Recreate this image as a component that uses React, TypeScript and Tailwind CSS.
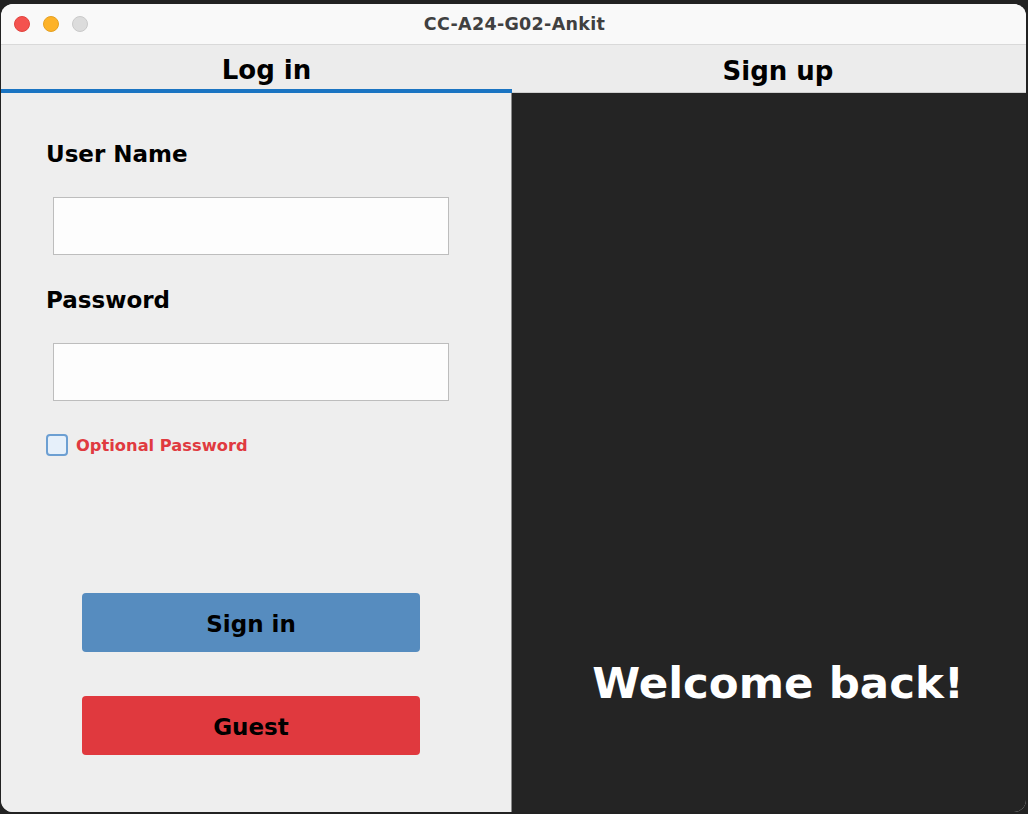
import React from "react";

export default function App() {
  const font = { fontFamily: '"DejaVu Sans", "Open Sans", sans-serif' };
  return (
    <div className="w-[1028px] h-[814px] bg-[#222222] overflow-hidden" style={font}>
      <div className="ml-[1px] mt-[4px] w-[1025px] h-[808px] rounded-[12px] overflow-hidden flex flex-col bg-[#eeeeee]">
        {/* title bar */}
        <div className="relative h-[41px] bg-[#f9f9f9] border-b border-[#d9d9d9] flex items-center justify-center shrink-0">
          <div className="absolute left-[13px] top-[12px] flex gap-[13px]">
            <div className="w-[16px] h-[16px] rounded-full bg-[#f4524f] border border-[#e0443e]" />
            <div className="w-[16px] h-[16px] rounded-full bg-[#fdb228] border border-[#e4a023]" />
            <div className="w-[16px] h-[16px] rounded-full bg-[#dcdcdc] border border-[#c9c9c9]" />
          </div>
          <span className="text-[17.5px] font-bold text-[#404040] tracking-[0.3px] pl-[2px]">CC-A24-G02-Ankit</span>
        </div>
        {/* tabs */}
        <div className="flex h-[48px] shrink-0 bg-[#ececec]">
          <div className="w-[511px] flex flex-col">
            <div className="flex-1 min-h-0 flex items-center justify-center text-[26px] leading-[30px] font-bold text-black pt-[6px] pl-[20px]">Log in</div>
            <div className="h-[4px] shrink-0 bg-[#1a74c2]" />
          </div>
          <div className="flex-1 flex flex-col">
            <div className="flex-1 min-h-0 flex items-center justify-center text-[26px] leading-[30px] font-bold text-black pt-[5px] pl-[18px]">Sign up</div>
            <div className="h-[1px] shrink-0 bg-[#cfcfcf]" />
          </div>
        </div>
        {/* content */}
        <div className="flex flex-1">
          <div className="w-[511px] bg-[#eeeeee] border-r border-[#8a8a8a] flex flex-col pl-[45px]">
            <div className="mt-[47px] text-[23px] font-bold text-black leading-[28px]">User Name</div>
            <div className="mt-[29px] ml-[7px] w-[396px] h-[58px] bg-[#fdfdfd] border border-[#bdbdbd]" />
            <div className="mt-[31px] text-[23px] font-bold text-black leading-[28px]">Password</div>
            <div className="mt-[29px] ml-[7px] w-[396px] h-[58px] bg-[#fdfdfd] border border-[#bdbdbd]" />
            <div className="mt-[32px] h-[24px] flex items-center gap-[8px]">
              <div className="w-[22px] h-[22px] rounded-[4px] border-2 border-[#6c9fd2] bg-[#e6f0fa]" />
              <span className="text-[16.3px] leading-[20px] font-bold text-[#e03a40] pt-[1px]">Optional Password</span>
            </div>
            <div className="mt-[136px] ml-[36px] w-[338px] h-[59px] rounded-[4px] bg-[#568cbf] flex items-center justify-center text-[23px] font-bold text-black pt-[3px]">Sign in</div>
            <div className="mt-[44px] ml-[36px] w-[338px] h-[59px] rounded-[4px] bg-[#e0393e] flex items-center justify-center text-[23px] font-bold text-black pt-[3px]">Guest</div>
          </div>
          <div className="flex-1 bg-[#242424] flex flex-col items-center justify-end pb-[96px] pl-[18px]">
            <span className="text-[43.5px] font-bold text-white">Welcome back!</span>
          </div>
        </div>
      </div>
    </div>
  );
}
